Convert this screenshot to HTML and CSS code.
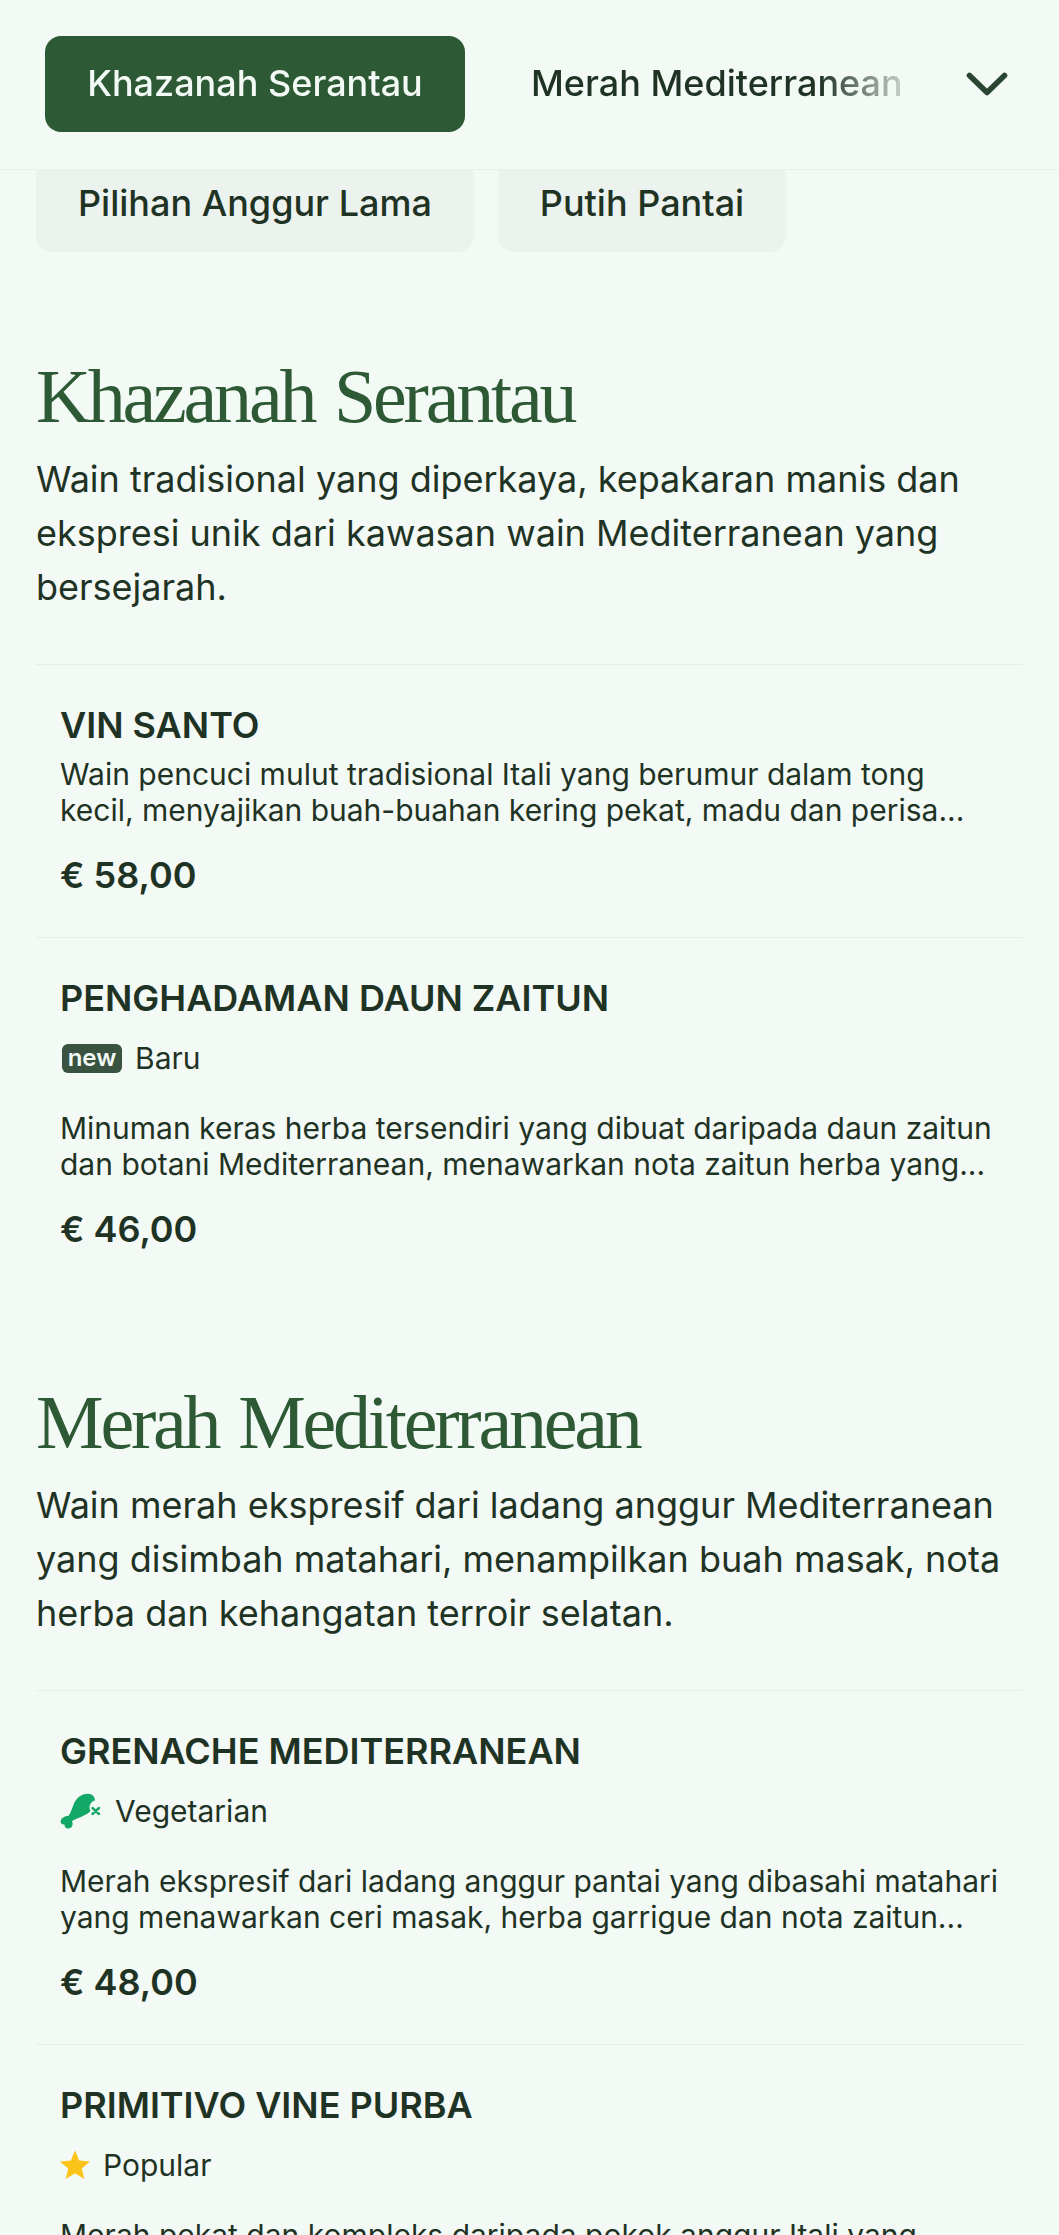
FILE: index.html
```html
<!DOCTYPE html>
<html lang="ms">
  <head>
    <meta charset="UTF-8" />
    <meta name="viewport" content="width=device-width, initial-scale=1.0" />
    <title>Menu Wain</title>
    <link rel="stylesheet" href="styles.css">
  </head>
  <body>
    <!-- top category bar, sits over the scrolled pills -->
    <header class="topbar">
      <div class="tabs">
        <a class="tab tab-active" href="#khazanah">Khazanah Serantau</a>
        <a class="tab" href="#merah">Merah Mediterranean</a>
      </div>
      <button class="tab-toggle" type="button" aria-label="Semua kategori">
        <svg viewBox="0 0 42 24" width="42" height="24" fill="none" stroke="#2a4632" stroke-width="5.6" stroke-linecap="round" stroke-linejoin="round">
          <path d="M3.5 3.5 L21 20.5 L38.5 3.5" />
        </svg>
      </button>
    </header>

    <nav class="pills">
      <a class="pill" href="#lama">Pilihan Anggur Lama</a>
      <a class="pill" href="#putih">Putih Pantai</a>
    </nav>

    <main class="content">
      <section class="section" id="khazanah">
        <h2 class="section-title">Khazanah Serantau</h2>
        <p class="section-text">Wain tradisional yang diperkaya, kepakaran manis dan ekspresi unik dari kawasan wain Mediterranean yang bersejarah.</p>

        <article class="item">
          <h3 class="item-name">VIN SANTO</h3>
          <p class="item-desc">Wain pencuci mulut tradisional Itali yang berumur dalam tong kecil, menyajikan buah-buahan kering pekat, madu dan perisa...</p>
          <div class="item-price">€ 58,00</div>
        </article>

        <article class="item">
          <h3 class="item-name">PENGHADAMAN DAUN ZAITUN</h3>
          <div class="item-tag">
            <span class="badge-new">new</span>
            <span>Baru</span>
          </div>
          <p class="item-desc">Minuman keras herba tersendiri yang dibuat daripada daun zaitun dan botani Mediterranean, menawarkan nota zaitun herba yang...</p>
          <div class="item-price">€ 46,00</div>
        </article>
      </section>

      <section class="section" id="merah">
        <h2 class="section-title">Merah Mediterranean</h2>
        <p class="section-text">Wain merah ekspresif dari ladang anggur Mediterranean yang disimbah matahari, menampilkan buah masak, nota herba dan kehangatan terroir selatan.</p>

        <article class="item">
          <h3 class="item-name">GRENACHE MEDITERRANEAN</h3>
          <div class="item-tag">
            <svg class="icon-veg" viewBox="0 0 42 36" width="42" height="36">
              <path fill="#12a866" d="M8.3 23 C11 20 12 15 14 10.5 C16.5 5 21 .7 28 .7 C32 .7 35 3.5 35 7.5 C32 8 29.5 11 29.5 14.5 C29.5 16 30 17 30.5 18 C27 22 20 24 12 28 C13.5 31 12.5 35.5 8 35.5 C5.5 35.5 4.5 33.5 4.5 31.5 C2 32 .7 30.5 .7 28.5 C.7 25 5 23 8.3 23 Z" />
              <path stroke="#12a866" stroke-width="2.4" stroke-linecap="round" fill="none" d="M32.5 15 L39 21 M39 15 L32.5 21" />
            </svg>
            <span>Vegetarian</span>
          </div>
          <p class="item-desc">Merah ekspresif dari ladang anggur pantai yang dibasahi matahari yang menawarkan ceri masak, herba garrigue dan nota zaitun...</p>
          <div class="item-price">€ 48,00</div>
        </article>

        <article class="item">
          <h3 class="item-name">PRIMITIVO VINE PURBA</h3>
          <div class="item-tag">
            <svg class="icon-star" viewBox="0 0 30 30" width="30" height="30">
              <path fill="#fcc419" d="M15 0.5 L19.2 10.6 L30 11.4 L21.8 18.4 L24.3 29 L15 23.3 L5.7 29 L8.2 18.4 L0 11.4 L10.8 10.6 Z" />
            </svg>
            <span>Popular</span>
          </div>
          <p class="item-desc">Merah pekat dan kompleks daripada pokok anggur Itali yang berusia, menampilkan buah hitam, rempah dan nota coklat yang...</p>
          <div class="item-price">€ 52,00</div>
        </article>
      </section>
    </main>
  </body>
</html>
```

FILE: styles.css
```css
* {
  font-family: "Inter", "Liberation Sans", sans-serif;
  padding: 0;
  margin: 0;
  box-sizing: border-box;
}

html,
body {
  height: 100%;
  overflow: hidden;
}

body {
  background: #f3f9f4;
  color: #1f3325;
}

a {
  text-decoration: none;
  color: inherit;
}

/* top bar */
.topbar {
  position: relative;
  z-index: 10;
  height: 170px;
  padding: 36px 36px 0 45px;
  display: flex;
  align-items: flex-start;
  background: #f3f9f4;
  border-bottom: 1px solid #ebf0ec;
}

.tabs {
  display: flex;
  gap: 66px;
  width: 880px;
  overflow: hidden;
  -webkit-mask-image: linear-gradient(to right, #000 88%, transparent 100%);
  mask-image: linear-gradient(to right, #000 88%, transparent 100%);
}

.tab {
  flex-shrink: 0;
  height: 96px;
  line-height: 94px;
  font-size: 36px;
  font-weight: 500;
  white-space: nowrap;
}

.tab-active {
  width: 420px;
  text-align: center;
  background: #2d5a35;
  color: #f3f9f4;
  border-radius: 16px;
}

.tab-toggle {
  margin-left: 41px;
  margin-top: 36px;
  width: 42px;
  height: 24px;
  border: 0;
  background: none;
}

.tab-toggle svg {
  display: block;
}

/* pills half hidden under the top bar */
.pills {
  display: flex;
  gap: 24px;
  margin: -14px 36px 0;
}

.pill {
  height: 96px;
  padding: 0 42px;
  line-height: 94px;
  font-size: 36px;
  font-weight: 500;
  background: #ecf2ed;
  border-radius: 16px;
}

/* sections */
.content {
  padding: 0 36px;
}

.section {
  padding-top: 105px;
}

.section + .section {
  padding-top: 92px;
}

.section-title {
  font-family: "Liberation Serif", serif;
  font-size: 76px;
  line-height: 78px;
  font-weight: 400;
  letter-spacing: -3.2px;
  word-spacing: 4px;
  color: #2d5a35;
}

.section-text {
  margin-top: 17px;
  font-size: 36px;
  line-height: 54px;
  padding-bottom: 50px;
  color: #1f3325;
}

.item {
  border-top: 1px solid #e8eee9;
  padding: 38px 24px 40px;
}

.item-name {
  font-size: 36px;
  line-height: 44px;
  font-weight: 600;
}

.item-tag {
  display: flex;
  align-items: center;
  gap: 13px;
  margin-top: 18px;
  height: 40px;
  font-size: 30px;
}

.badge-new {
  width: 60px;
  height: 29px;
  margin-left: 2px;
  line-height: 27px;
  text-align: center;
  font-size: 24px;
  font-weight: 600;
  color: #f3f9f4;
  background: #3a5240;
  border-radius: 6px;
}

.item-desc {
  margin-top: 9px;
  font-size: 30px;
  line-height: 36px;
}

.item-tag + .item-desc {
  margin-top: 32px;
}

.item-price {
  margin-top: 25px;
  font-size: 36px;
  line-height: 44px;
  font-weight: 600;
}
```
